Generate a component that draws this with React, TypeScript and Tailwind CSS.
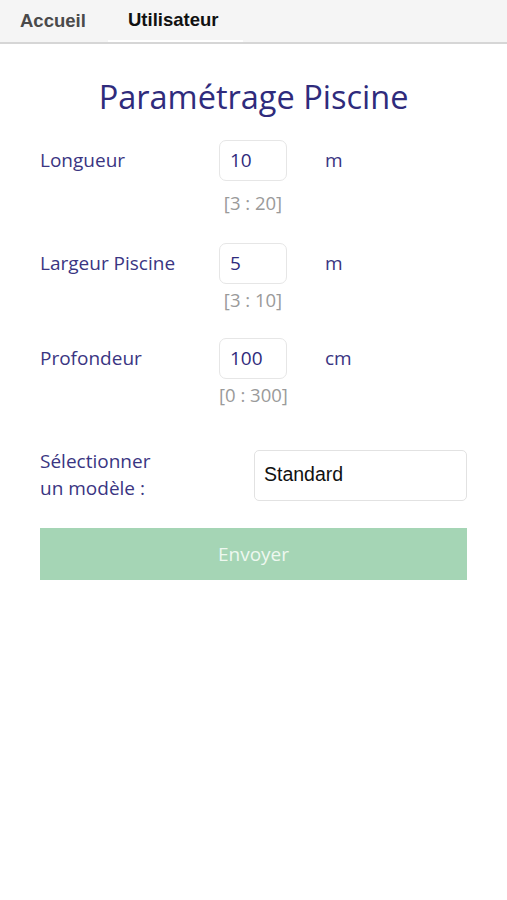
import React from "react";

const fields = [
  { label: "Longueur", value: "10", unit: "m", range: "[3 : 20]", gap: "mt-[23px]", rangeGap: "mt-[11px]" },
  { label: "Largeur Piscine", value: "5", unit: "m", range: "[3 : 10]", gap: "mt-[29px]", rangeGap: "mt-[5px]" },
  { label: "Profondeur", value: "100", unit: "cm", range: "[0 : 300]", gap: "mt-[27px]", rangeGap: "mt-[5px]" },
];

export default function App() {
  return (
    <div className="min-h-[900px] w-full bg-white font-['Open_Sans',sans-serif]">
      <div className="flex h-[44px] border-b-2 border-[#d6d6d6] bg-[#f5f5f5] font-['Liberation_Sans',sans-serif] text-[18.5px] font-bold">
        <div className="flex w-[108px] items-center pl-[20px] text-[#4a4a4a]">Accueil</div>
        <div className="flex w-[135px] items-center border-b-2 border-white pl-[20px] text-[#111]">
          Utilisateur
        </div>
      </div>

      <h1 className="mt-[33px] text-center text-[32.5px] leading-[40px] text-[#2f2b7c]">
        Paramétrage Piscine
      </h1>

      <div className="px-[40px]">
        {fields.map((f) => (
          <div key={f.label} className={f.gap}>
            <div className="flex items-center">
              <div className="w-[179px] text-[19px] text-[#3a3582]">{f.label}</div>
              <div className="flex h-[41px] w-[68px] items-center rounded-[7px] border border-[#e6e6e6] pl-[10px] text-[19px] text-[#2f2b7c]">
                {f.value}
              </div>
              <div className="ml-[38px] text-[19px] text-[#3a3582]">{f.unit}</div>
            </div>
            <div
              className={`ml-[179px] w-[68px] whitespace-nowrap text-center text-[18.5px] leading-[22px] text-[#9a9a9a] ${f.rangeGap}`}
            >
              {f.range}
            </div>
          </div>
        ))}

        <div className="mt-[42px] flex items-center justify-between">
          <div className="text-[19px] leading-[27px] text-[#3a3582]">
            Sélectionner
            <br />
            un modèle :
          </div>
          <div className="flex h-[51px] w-[213px] items-center rounded-[5px] border border-[#e2e2e2] pl-[9px] font-['Liberation_Sans',sans-serif] text-[19.5px] text-[#111]">
            Standard
          </div>
        </div>

        <button
          type="button"
          className="mt-[26px] flex h-[52px] w-full items-center justify-center bg-[#a5d5b5] text-[19px] text-[#eef8f0]"
        >
          Envoyer
        </button>
      </div>
    </div>
  );
}
